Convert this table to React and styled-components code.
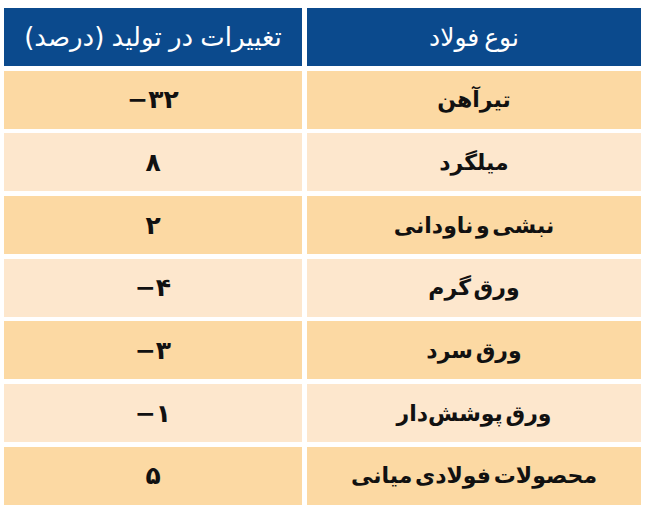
import styled, { createGlobalStyle } from 'styled-components'

const rows = [
  { name: 'تیرآهن', change: '−۳۲' },
  { name: 'میلگرد', change: '۸' },
  { name: 'نبشی و ناودانی', change: '۲' },
  { name: 'ورق گرم', change: '−۴' },
  { name: 'ورق سرد', change: '−۳' },
  { name: 'ورق پوشش‌دار', change: '−۱' },
  { name: 'محصولات فولادی میانی', change: '۵' }
]

export default function App() {
  return (
    <>
      <GlobalStyle />
      <Page>
        <Table>
          <HeadCell>نوع فولاد</HeadCell>
          <HeadCell wide>تغییرات در تولید (درصد)</HeadCell>
          {rows.map((row, i) => (
            <Row key={row.name}>
              <Cell shade={i % 2 === 0 ? 'dark' : 'light'}>{row.name}</Cell>
              <Cell shade={i % 2 === 0 ? 'dark' : 'light'}>
                <Number dir="ltr">{row.change}</Number>
              </Cell>
            </Row>
          ))}
        </Table>
      </Page>
    </>
  )
}

const GlobalStyle = createGlobalStyle`
  body {
    margin: 0;
    background: #ffffff;
    font-family: "DejaVu Sans", "Noto Sans", sans-serif;
  }
`

const Page = styled.div`
  padding: 8px 5px 0 4px;
  width: 646px;
  height: 529px;
  box-sizing: border-box;
`

const Table = styled.div`
  direction: rtl;
  display: grid;
  grid-template-columns: 334px 298px;
  grid-auto-rows: 58px;
  column-gap: 5px;
  row-gap: 4.7px;
`

const Row = styled.div`
  display: contents;
`

const HeadCell = styled.div`
  display: flex;
  align-items: center;
  justify-content: center;
  background: #0b4a8d;
  color: #ffffff;
  font-size: ${(props) => (props.wide ? '26px' : '25px')};
  word-spacing: ${(props) => (props.wide ? '-1px' : '-3px')};
`

const Cell = styled.div`
  display: flex;
  align-items: center;
  justify-content: center;
  background: ${(props) => (props.shade === 'dark' ? '#fcd9a3' : '#fde7cd')};
  color: #111111;
  font-size: 22px;
  font-weight: bold;
  word-spacing: -5px;
`

const Number = styled.span`
  direction: ltr;
  unicode-bidi: isolate;
  font-size: 25px;
`
